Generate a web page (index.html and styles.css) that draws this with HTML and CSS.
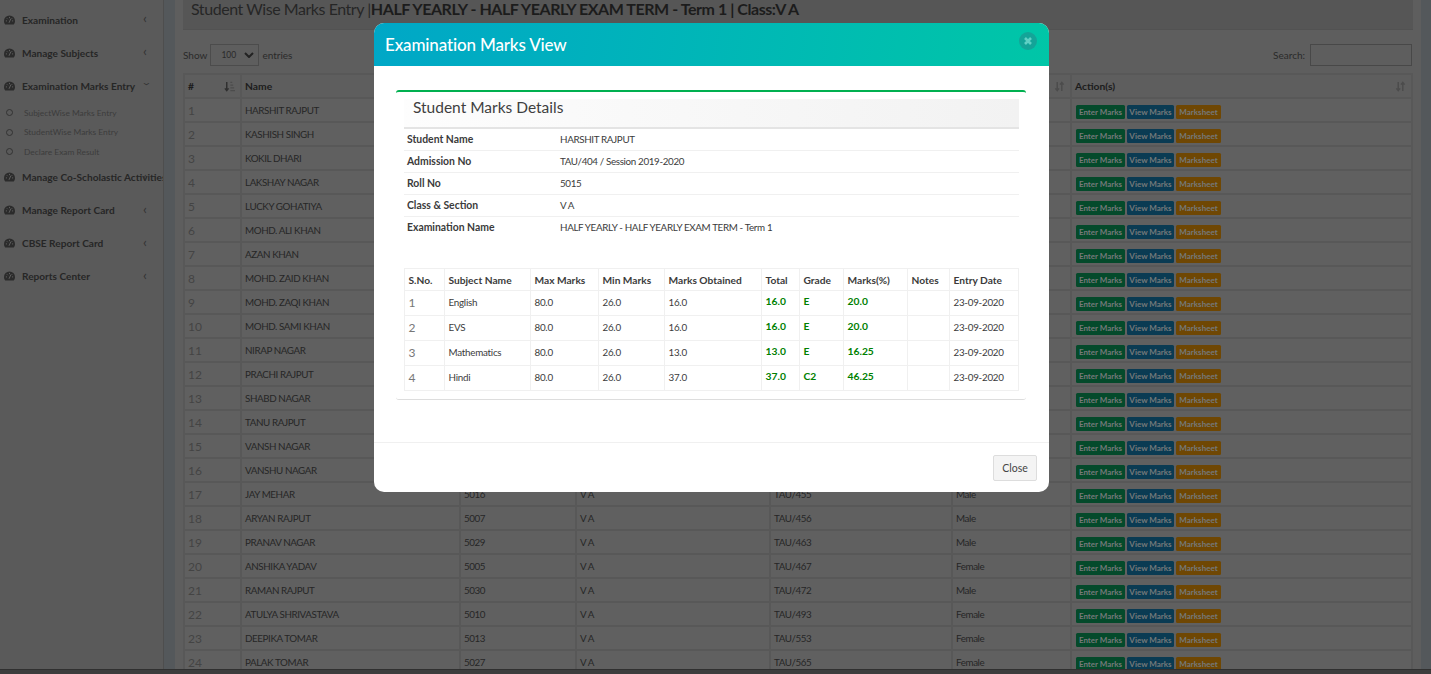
FILE: index.html
```html
<!DOCTYPE html>
<html lang="en">
<head>
<meta charset="utf-8">
<title>Student Wise Marks Entry</title>
<link rel="stylesheet" href="styles.css">
</head>
<body>
<svg class="defs" aria-hidden="true"><defs>
<symbol id="gauge" viewBox="0 0 12 10"><path d="M6 0A6 6 0 0 0 0 6c0 1.5.5 2.9 1.4 4h9.2c.9-1.1 1.4-2.500 1.400-4A6 6 0 0 0 6 0z" fill="#2b2b2b"/><path d="M2 6h1.300M8.700 6H10M6 1.600V3M3.200 3.200l.9.9M8.800 3.200l-.9.9M5.500 8 7.500 3.500" stroke="#6a6a6a" stroke-width=".9" fill="none"/></symbol>
<symbol id="sort" viewBox="0 0 12 12"><path d="M3.500 1v9M1.500 8l2 2.500 2-2.500M8.500 11V2M6.500 4l2-2.500 2 2.500" stroke="#4c4c4c" stroke-width="1.600" fill="none"/></symbol>
<symbol id="sortnum" viewBox="0 0 12 12"><path d="M3 1v9M1 8l2 2.500L5 8" stroke="#303030" stroke-width="1.600" fill="none"/><path d="M7 1.500h2M7 4.500h3M7 7.500h4M7 10.500h5" stroke="#4c4c4c" stroke-width="1.100" fill="none"/></symbol>
</defs></svg>

<div class="page">
  <aside class="sidebar">
    <a class="nav-item"><svg class="nav-icon"><use href="#gauge"/></svg><span class="nav-label">Examination</span><span class="chev">‹</span></a>
    <a class="nav-item"><svg class="nav-icon"><use href="#gauge"/></svg><span class="nav-label">Manage Subjects</span><span class="chev">‹</span></a>
    <a class="nav-item"><svg class="nav-icon"><use href="#gauge"/></svg><span class="nav-label">Examination Marks Entry</span><span class="chev open">‹</span></a>
    <ul class="subnav">
      <li><span class="ring"></span>SubjectWise Marks Entry</li>
      <li><span class="ring"></span>StudentWise Marks Entry</li>
      <li><span class="ring"></span>Declare Exam Result</li>
    </ul>
    <a class="nav-item nav-after"><svg class="nav-icon"><use href="#gauge"/></svg><span class="nav-label">Manage Co-Scholastic Activities</span><span class="chev">‹</span></a>
    <a class="nav-item"><svg class="nav-icon"><use href="#gauge"/></svg><span class="nav-label">Manage Report Card</span><span class="chev">‹</span></a>
    <a class="nav-item"><svg class="nav-icon"><use href="#gauge"/></svg><span class="nav-label">CBSE Report Card</span><span class="chev">‹</span></a>
    <a class="nav-item"><svg class="nav-icon"><use href="#gauge"/></svg><span class="nav-label">Reports Center</span><span class="chev">‹</span></a>
  </aside>

  <main class="content">
    <div class="panel">
      <header class="page-title">Student Wise Marks Entry |<b>HALF YEARLY - HALF YEARLY EXAM TERM - Term 1 | Class:V A</b></header>
      <div class="controls">
        <label class="show">Show <span class="select">100<svg class="select-chev" viewBox="0 0 10 6"><path d="M1 1l4 4 4-4" stroke="#222" stroke-width="2" fill="none"/></svg></span> entries</label>
        <label class="search">Search: <span class="search-box"></span></label>
      </div>
      <table class="students">
        <thead><tr><th class="c-no">#<svg class="sort-ico"><use href="#sortnum"/></svg></th><th class="c-name">Name</th><th class="c-roll">Roll No</th><th class="c-class">Class</th><th class="c-adm">Admission No</th><th class="c-gen">Gender<svg class="sort-ico"><use href="#sort"/></svg></th><th class="c-act">Action(s)<svg class="sort-ico"><use href="#sort"/></svg></th></tr></thead>
        <tbody>
<tr><td class="num">1</td><td>HARSHIT RAJPUT</td><td>5015</td><td>V A</td><td>TAU/404</td><td></td><td class="acts"><span class="btn g">Enter Marks</span><span class="btn b">View Marks</span><span class="btn o">Marksheet</span></td></tr>
<tr><td class="num">2</td><td>KASHISH SINGH</td><td></td><td></td><td></td><td></td><td class="acts"><span class="btn g">Enter Marks</span><span class="btn b">View Marks</span><span class="btn o">Marksheet</span></td></tr>
<tr><td class="num">3</td><td>KOKIL DHARI</td><td></td><td></td><td></td><td></td><td class="acts"><span class="btn g">Enter Marks</span><span class="btn b">View Marks</span><span class="btn o">Marksheet</span></td></tr>
<tr><td class="num">4</td><td>LAKSHAY NAGAR</td><td></td><td></td><td></td><td></td><td class="acts"><span class="btn g">Enter Marks</span><span class="btn b">View Marks</span><span class="btn o">Marksheet</span></td></tr>
<tr><td class="num">5</td><td>LUCKY GOHATIYA</td><td></td><td></td><td></td><td></td><td class="acts"><span class="btn g">Enter Marks</span><span class="btn b">View Marks</span><span class="btn o">Marksheet</span></td></tr>
<tr><td class="num">6</td><td>MOHD. ALI KHAN</td><td></td><td></td><td></td><td></td><td class="acts"><span class="btn g">Enter Marks</span><span class="btn b">View Marks</span><span class="btn o">Marksheet</span></td></tr>
<tr><td class="num">7</td><td>AZAN KHAN</td><td></td><td></td><td></td><td></td><td class="acts"><span class="btn g">Enter Marks</span><span class="btn b">View Marks</span><span class="btn o">Marksheet</span></td></tr>
<tr><td class="num">8</td><td>MOHD. ZAID KHAN</td><td></td><td></td><td></td><td></td><td class="acts"><span class="btn g">Enter Marks</span><span class="btn b">View Marks</span><span class="btn o">Marksheet</span></td></tr>
<tr><td class="num">9</td><td>MOHD. ZAQI KHAN</td><td></td><td></td><td></td><td></td><td class="acts"><span class="btn g">Enter Marks</span><span class="btn b">View Marks</span><span class="btn o">Marksheet</span></td></tr>
<tr><td class="num">10</td><td>MOHD. SAMI KHAN</td><td></td><td></td><td></td><td></td><td class="acts"><span class="btn g">Enter Marks</span><span class="btn b">View Marks</span><span class="btn o">Marksheet</span></td></tr>
<tr><td class="num">11</td><td>NIRAP NAGAR</td><td></td><td></td><td></td><td></td><td class="acts"><span class="btn g">Enter Marks</span><span class="btn b">View Marks</span><span class="btn o">Marksheet</span></td></tr>
<tr><td class="num">12</td><td>PRACHI RAJPUT</td><td></td><td></td><td></td><td></td><td class="acts"><span class="btn g">Enter Marks</span><span class="btn b">View Marks</span><span class="btn o">Marksheet</span></td></tr>
<tr><td class="num">13</td><td>SHABD NAGAR</td><td></td><td></td><td></td><td></td><td class="acts"><span class="btn g">Enter Marks</span><span class="btn b">View Marks</span><span class="btn o">Marksheet</span></td></tr>
<tr><td class="num">14</td><td>TANU RAJPUT</td><td></td><td></td><td></td><td></td><td class="acts"><span class="btn g">Enter Marks</span><span class="btn b">View Marks</span><span class="btn o">Marksheet</span></td></tr>
<tr><td class="num">15</td><td>VANSH NAGAR</td><td></td><td></td><td></td><td></td><td class="acts"><span class="btn g">Enter Marks</span><span class="btn b">View Marks</span><span class="btn o">Marksheet</span></td></tr>
<tr><td class="num">16</td><td>VANSHU NAGAR</td><td></td><td></td><td></td><td></td><td class="acts"><span class="btn g">Enter Marks</span><span class="btn b">View Marks</span><span class="btn o">Marksheet</span></td></tr>
<tr><td class="num">17</td><td>JAY MEHAR</td><td>5016</td><td>V A</td><td>TAU/455</td><td>Male</td><td class="acts"><span class="btn g">Enter Marks</span><span class="btn b">View Marks</span><span class="btn o">Marksheet</span></td></tr>
<tr><td class="num">18</td><td>ARYAN RAJPUT</td><td>5007</td><td>V A</td><td>TAU/456</td><td>Male</td><td class="acts"><span class="btn g">Enter Marks</span><span class="btn b">View Marks</span><span class="btn o">Marksheet</span></td></tr>
<tr><td class="num">19</td><td>PRANAV NAGAR</td><td>5029</td><td>V A</td><td>TAU/463</td><td>Male</td><td class="acts"><span class="btn g">Enter Marks</span><span class="btn b">View Marks</span><span class="btn o">Marksheet</span></td></tr>
<tr><td class="num">20</td><td>ANSHIKA YADAV</td><td>5005</td><td>V A</td><td>TAU/467</td><td>Female</td><td class="acts"><span class="btn g">Enter Marks</span><span class="btn b">View Marks</span><span class="btn o">Marksheet</span></td></tr>
<tr><td class="num">21</td><td>RAMAN RAJPUT</td><td>5030</td><td>V A</td><td>TAU/472</td><td>Male</td><td class="acts"><span class="btn g">Enter Marks</span><span class="btn b">View Marks</span><span class="btn o">Marksheet</span></td></tr>
<tr><td class="num">22</td><td>ATULYA SHRIVASTAVA</td><td>5010</td><td>V A</td><td>TAU/493</td><td>Female</td><td class="acts"><span class="btn g">Enter Marks</span><span class="btn b">View Marks</span><span class="btn o">Marksheet</span></td></tr>
<tr><td class="num">23</td><td>DEEPIKA TOMAR</td><td>5013</td><td>V A</td><td>TAU/553</td><td>Female</td><td class="acts"><span class="btn g">Enter Marks</span><span class="btn b">View Marks</span><span class="btn o">Marksheet</span></td></tr>
<tr><td class="num">24</td><td>PALAK TOMAR</td><td>5027</td><td>V A</td><td>TAU/565</td><td>Female</td><td class="acts"><span class="btn g">Enter Marks</span><span class="btn b">View Marks</span><span class="btn o">Marksheet</span></td></tr>
        </tbody>
      </table>
    </div>
  </main>
</div>
<div class="bottom-bar"></div>

<section class="modal">
  <header class="modal-head">
    <h2>Examination Marks View</h2>
    <span class="modal-x"><svg viewBox="0 0 10 10"><path d="M2 2l6 6M8 2l-6 6" stroke="#5fd0c4" stroke-width="2.600" fill="none"/></svg></span>
  </header>
  <div class="modal-body">
    <div class="box">
      <h3>Student Marks Details</h3>
      <table class="info">
        <tr><th>Student Name</th><td>HARSHIT RAJPUT</td></tr>
        <tr><th>Admission No</th><td>TAU/404 / Session 2019-2020</td></tr>
        <tr><th>Roll No</th><td>5015</td></tr>
        <tr><th>Class &amp; Section</th><td>V A</td></tr>
        <tr><th>Examination Name</th><td>HALF YEARLY - HALF YEARLY EXAM TERM - Term 1</td></tr>
      </table>
      <table class="marks">
        <thead><tr><th class="m1">S.No.</th><th class="m2">Subject Name</th><th class="m3">Max Marks</th><th class="m4">Min Marks</th><th class="m5">Marks Obtained</th><th class="m6">Total</th><th class="m7">Grade</th><th class="m8">Marks(%)</th><th class="m9">Notes</th><th class="m10">Entry Date</th></tr></thead>
        <tbody>
          <tr><td class="num">1</td><td>English</td><td>80.0</td><td>26.0</td><td>16.0</td><td class="ok">16.0</td><td class="ok">E</td><td class="ok">20.0</td><td></td><td>23-09-2020</td></tr>
          <tr><td class="num">2</td><td>EVS</td><td>80.0</td><td>26.0</td><td>16.0</td><td class="ok">16.0</td><td class="ok">E</td><td class="ok">20.0</td><td></td><td>23-09-2020</td></tr>
          <tr><td class="num">3</td><td>Mathematics</td><td>80.0</td><td>26.0</td><td>13.0</td><td class="ok">13.0</td><td class="ok">E</td><td class="ok">16.25</td><td></td><td>23-09-2020</td></tr>
          <tr><td class="num">4</td><td>Hindi</td><td>80.0</td><td>26.0</td><td>37.0</td><td class="ok">37.0</td><td class="ok">C2</td><td class="ok">46.25</td><td></td><td>23-09-2020</td></tr>
        </tbody>
      </table>
    </div>
  </div>
  <footer class="modal-foot"><span class="close-btn">Close</span></footer>
</section>
</body>
</html>
```
FILE: styles.css
```css
* { box-sizing: border-box; }
html, body { margin: 0; height: 100%; overflow: hidden; }
body { background: #5a5a5a; font-family: Lato, "Liberation Sans", sans-serif; font-size: 10px; color: #262626; }
.defs { width: 0; height: 0; position: absolute; }
.page { display: flex; height: 674px; overflow: hidden; }

.sidebar { flex: 0 0 164px; background: #5a5a5a; border-right: 1px solid #4e4e4e; padding-top: 3px; overflow: hidden; }
.nav-item { position: relative; display: flex; align-items: center; height: 33px; padding-left: 4px; font-weight: 700; color: #262626; white-space: nowrap; }
.nav-after { margin-top: -1px; }
.nav-icon { width: 11px; height: 10px; flex: none; margin-right: 7px; }
.nav-label { font-size: 10.1px; }
.chev { position: absolute; left: 141px; top: 8px; width: 8px; font-size: 14px; font-weight: 400; color: #333; line-height: 1; text-align: center; }
.chev.open { transform: rotate(-90deg); }
.subnav { list-style: none; margin: 0; padding: 1px 0 0 6px; }
.subnav li { display: flex; align-items: center; height: 19.5px; font-size: 8.4px; color: #3c3c3c; }
.ring { width: 7px; height: 7px; border: 1px solid #333; border-radius: 50%; margin-right: 11px; flex: none; }

.content { flex: 1; background: #54585b; padding: 0 10px 0 11px; min-width: 0; }
.panel { background: #5e5e5e; height: 100%; padding: 0 8px; }
.page-title { height: 30px; background: #565656; border-bottom: 1px solid #525252; padding: 0 8px; font-size: 16px; letter-spacing: -.45px; line-height: 17px; color: #262626; white-space: nowrap; overflow: hidden; }
.page-title b { font-weight: 700; color: #1c1c1c; }
.controls { display: flex; justify-content: space-between; align-items: center; height: 43px; padding-top: 7px; font-size: 10px; color: #2a2a2a; }
.show, .search { display: flex; align-items: center; gap: 3px; }
.search { margin-right: 1px; }
.select { display: flex; align-items: center; justify-content: space-between; width: 49px; height: 22px; border: 1px solid #4c4c4c; padding: 0 4px 0 10px; font-size: 8.5px; }
.select-chev { width: 10px; height: 6px; }
.search-box { width: 102px; height: 22px; border: 1px solid #484848; margin-left: 2px; }

.students { border-collapse: collapse; table-layout: fixed; width: 1228px; }
.students th, .students td { border: 2px solid #585858; height: 24px; padding: 0 3px; text-align: left; white-space: nowrap; overflow: hidden; font-size: 9.8px; letter-spacing: -.4px; color: #262626; background: #606060; }
.students th { font-weight: 700; font-size: 10.3px; letter-spacing: 0; position: relative; background: #5e5e5e; color: #1c1c1c; }
.students .num { font-size: 12px; letter-spacing: 0; color: #444; }
.students .acts { padding-left: 4px; padding-top: 4px; letter-spacing: 0; }
.c-no { width: 57px; }
.c-name { width: 219px; }
.c-roll { width: 116px; }
.c-class { width: 194px; }
.c-adm { width: 182px; }
.c-gen { width: 119px; }
.c-act { width: 341px; }
.sort-ico { position: absolute; right: 5px; top: 6px; width: 11px; height: 11px; }
.btn { display: inline-flex; align-items: center; justify-content: center; height: 14px; margin-right: 2px; border-radius: 1.5px; font-size: 8px; font-weight: 700; vertical-align: middle; color: #75797a; }
.btn.g { width: 49px; background: #044a2b; }
.btn.b { width: 47px; background: #0a3b53; }
.btn.o { width: 45px; background: #6f4703; }

.bottom-bar { position: absolute; left: 0; right: 0; bottom: 0; height: 5px; background: #3d3d3d; border-top: 1px solid #303030; }

.modal { position: absolute; left: 374px; top: 23px; width: 675px; height: 469px; background: #fff; border-radius: 10px; overflow: hidden; display: flex; flex-direction: column; color: #3b3b3b; }
.modal-head { flex: 0 0 43px; display: flex; align-items: center; justify-content: space-between; padding: 0 12px 0 11px; background: linear-gradient(100deg, #00a7c7 0%, #00c6a7 100%); }
.modal-head h2 { margin: 0; font-size: 17px; letter-spacing: -.15px; font-weight: 500; color: #fff; }
.modal-x { width: 18px; height: 18px; border-radius: 50%; background: #13a498; display: flex; align-items: center; justify-content: center; margin-top: -7px; }
.modal-x svg { width: 10px; height: 10px; }
.modal-body { flex: 1; padding: 24px 23px 0 22px; }
.box { height: 310px; border-top: 2px solid #00b050; border-bottom: 1px solid #ddd; border-radius: 3px; padding: 7px 7px 0 8px; }
.box h3 { margin: 0; height: 30px; padding-left: 9px; font-size: 15.5px; font-weight: 400; line-height: 16px; color: #3f3f3f; background: linear-gradient(90deg, #fdfdfd, #f2f2f2); border-bottom: 2px solid #e4e4e4; }
.info { border-collapse: collapse; width: 100%; table-layout: fixed; margin-top: -1px; }
.info th, .info td { height: 22px; padding: 0 3px; border-bottom: 1px solid #f0f0f0; text-align: left; font-size: 9.8px; letter-spacing: -.35px; color: #3b3b3b; }
.info tr:last-child th, .info tr:last-child td { border-bottom: 0; }
.info th { width: 153px; font-weight: 700; font-size: 10.4px; letter-spacing: 0; }
.marks { border-collapse: collapse; width: 614px; table-layout: fixed; margin-top: 30px; }
.marks th, .marks td { border: 1px solid #f0f0f0; padding: 0 3.5px; text-align: left; font-size: 9.8px; letter-spacing: -.25px; color: #3b3b3b; white-space: nowrap; }
.marks th { height: 22px; font-weight: 700; font-size: 10.2px; letter-spacing: 0; }
.marks td { height: 25px; padding-bottom: 2px; }
.marks .num { font-size: 12px; letter-spacing: 0; color: #777; }
.marks .ok { color: #008000; font-weight: 700; font-size: 10.3px; letter-spacing: 0; padding-bottom: 5px; }
.m1 { width: 40px; } .m2 { width: 86px; } .m3 { width: 68px; } .m4 { width: 66px; } .m5 { width: 97px; }
.m6 { width: 38px; } .m7 { width: 44px; } .m8 { width: 64px; } .m9 { width: 42px; } .m10 { width: 69px; }
.modal-foot { flex: 0 0 50px; border-top: 1px solid #f0f0f0; display: flex; align-items: center; justify-content: flex-end; padding: 0 12px 0 0; }
.close-btn { width: 44px; height: 26px; background: #f4f4f4; border: 1px solid #ddd; border-radius: 2px; display: flex; align-items: center; justify-content: center; font-size: 10.5px; color: #444; }
```
